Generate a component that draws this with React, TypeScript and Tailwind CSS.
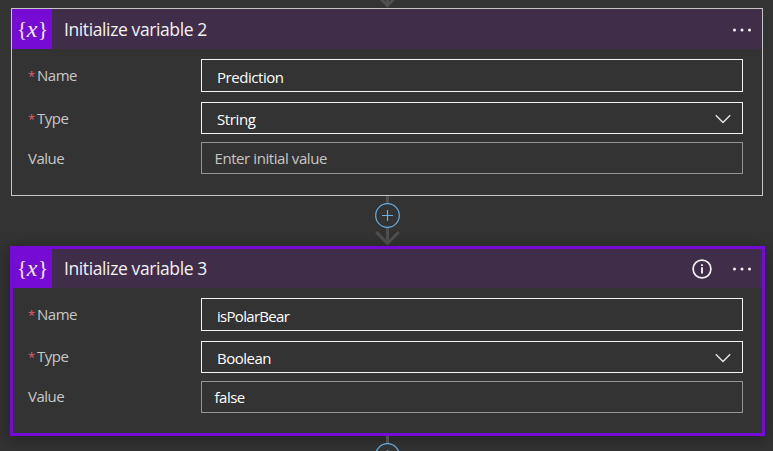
import React from "react";

type FieldProps = {
  label: string;
  value: string;
  required?: boolean;
  dropdown?: boolean;
  placeholder?: boolean;
  className: string;
  labelClass?: string;
  valueClass: string;
};

function Chevron() {
  return (
    <svg width="16" height="10" viewBox="0 0 16 10" fill="none" stroke="#e6e6e6" strokeWidth="1.4" className="mr-[11px] mt-[2px] shrink-0">
      <path d="M0.8 1.2 8 8.4 15.2 1.2" />
    </svg>
  );
}

function Field({ label, value, required, dropdown, placeholder, className, labelClass = "", valueClass }: FieldProps) {
  return (
    <div className={`flex items-center ${className}`}>
      <div className={`flex w-[173px] shrink-0 items-center text-[15px] leading-5 text-[#c8c8c8] ${labelClass}`}>
        {required && <span className="w-[9px] shrink-0 pt-px text-[13px] leading-[18px] text-[#e0606c]">*</span>}
        <span className="whitespace-nowrap tracking-[-0.5px]">{label}</span>
      </div>
      <div
        className={`flex h-full w-[542px] items-center justify-between border ${
          required ? "border-[#f3f2f1] pl-[15px]" : "border-[#979593] pl-[12.5px]"
        }`}
      >
        <span className={`whitespace-nowrap text-[15px] leading-5 ${placeholder ? "text-[#c8c6c4]" : "text-white"} ${valueClass}`}>
          {value}
        </span>
        {dropdown && <Chevron />}
      </div>
    </div>
  );
}

function VariableIcon({ className }: { className: string }) {
  return (
    <div className={`flex shrink-0 items-center justify-center bg-[#770bd6] font-['Liberation_Serif',serif] text-[#f6edfd] ${className}`}>
      <span className="w-[9px] text-center text-[21px] leading-5">{"{"}</span>
      <span className="w-[12px] text-center text-[24px] italic leading-5">x</span>
      <span className="w-[9px] text-center text-[21px] leading-5">{"}"}</span>
    </div>
  );
}

function Dots({ className = "" }: { className?: string }) {
  return (
    <svg width="20" height="6" viewBox="0 0 20 6" fill="#f3f2f1" className={className}>
      <circle cx="2.5" cy="3" r="1.5" />
      <circle cx="10" cy="3" r="1.5" />
      <circle cx="17.5" cy="3" r="1.5" />
    </svg>
  );
}

function Info() {
  return (
    <svg width="20" height="20" viewBox="0 0 20 20" fill="none" stroke="#f3f2f1" className="mr-[20.5px]">
      <circle cx="10" cy="10" r="8.9" strokeWidth="1.7" />
      <path d="M10 8.2V14.4M10 5.2V7" strokeWidth="1.9" />
    </svg>
  );
}

function AddStep() {
  return (
    <svg width="25" height="25" viewBox="0 0 25 25" fill="none" stroke="#69afe5" strokeWidth="1.2" className="shrink-0">
      <circle cx="12.5" cy="12.5" r="11.8" fill="#333333" />
      <path d="M12.5 7V18M7 12.5H18" />
    </svg>
  );
}

function ArrowHead() {
  return (
    <svg width="25" height="18" viewBox="0 0 25 18" fill="none" stroke="#505050" strokeWidth="3" className="shrink-0">
      <path d="M12.5 0V15M1.3 4 12.5 15.7 23.7 4" />
    </svg>
  );
}

export default function App() {
  return (
    <div className="flex h-[451px] w-[773px] flex-col overflow-hidden bg-[#333333] font-['Open_Sans',sans-serif]">
      <div className="flex h-2 shrink-0 flex-col justify-end overflow-hidden pl-[375px]">
        <ArrowHead />
      </div>

      <section className="ml-[11px] h-[188px] w-[752px] shrink-0 border border-[#c8c6c4]">
        <header className="flex h-10 items-center bg-[#3f2d4a] pr-[10px]">
          <VariableIcon className="h-10 w-10" />
          <h2 className="ml-3 flex-1 whitespace-nowrap text-[17.5px] leading-6 tracking-[-0.39px] text-[#f3f2f1]">Initialize variable 2</h2>
          <Dots className="mt-[2px]" />
        </header>
        <div className="pl-4 pt-[10px]">
          <Field label="Name" value="Prediction" required className="h-[33px]" labelClass="pb-px" valueClass="pt-[3px] tracking-[-0.45px]" />
          <Field label="Type" value="String" required dropdown className="mt-[10px] h-8" valueClass="pt-[2px] tracking-[-0.4px]" />
          <Field label="Value" value="Enter initial value" placeholder className="mt-2 h-8" valueClass="tracking-[-0.42px]" />
        </div>
      </section>

      <div className="ml-[375px] flex h-[50px] w-[25px] shrink-0 flex-col items-center">
        <div className="h-[7px] w-[3px] shrink-0 bg-[#505050]" />
        <AddStep />
        <ArrowHead />
      </div>

      <section className="ml-[10px] h-[190px] w-[755px] shrink-0 border-[3px] border-[#770bd6] shadow-[0_3px_14px_2px_rgba(0,0,0,0.28)]">
        <header className="flex h-[39px] items-center bg-[#3f2d4a] pr-[10px]">
          <VariableIcon className="h-[39px] w-[39px] pb-px pr-px" />
          <h2 className="ml-3 flex-1 whitespace-nowrap pb-px text-[17.5px] leading-6 tracking-[-0.39px] text-[#f3f2f1]">Initialize variable 3</h2>
          <Info />
          <Dots />
        </header>
        <div className="pl-[15px] pt-[10px]">
          <Field label="Name" value="isPolarBear" required className="h-[33px]" labelClass="pb-px" valueClass="pt-[3px] tracking-[-0.7px]" />
          <Field label="Type" value="Boolean" required dropdown className="mt-[10px] h-8" labelClass="pb-[2px]" valueClass="pt-[2px] tracking-[-0.5px]" />
          <Field label="Value" value="false" className="mt-2 h-8" labelClass="pb-[2px]" valueClass="tracking-[-0.5px]" />
        </div>
      </section>

      <div className="ml-[375px] flex w-[25px] flex-col items-center">
        <div className="h-[7px] w-[3px] shrink-0 bg-[#505050]" />
        <AddStep />
      </div>
    </div>
  );
}
